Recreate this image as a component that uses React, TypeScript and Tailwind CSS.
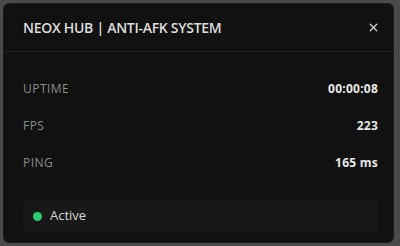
import { X } from "lucide-react";

const stats = [
  { label: "UPTIME", value: "00:00:08" },
  { label: "FPS", value: "223" },
  { label: "PING", value: "165 ms" },
];

export default function App() {
  return (
    <div
      className="h-[246px] w-[400px] bg-[#4a4a4a] p-[3px] pr-[6px] pb-[3px]"
      style={{ fontFamily: '"Open Sans", "Noto Sans", sans-serif' }}
    >
      <div className="flex h-full flex-col rounded-md border border-[#1c1c1c] bg-[#111111]">
        <div className="flex h-[48px] items-center justify-between border-b border-[#222222] pl-[19px] pr-[13px]">
          <span className="text-[14px] font-semibold tracking-[-0.02em] text-[#dedede]">
            NEOX HUB | ANTI-AFK SYSTEM
          </span>
          <X className="h-[13px] w-[13px] text-[#cfcfcf]" strokeWidth={2.5} />
        </div>

        <div className="flex flex-col pl-[19px] pr-[15px] pt-[28px]">
          {stats.map((s) => (
            <div key={s.label} className="flex h-[37px] items-start justify-between">
              <span className="text-[12px] tracking-[0.04em] text-[#8c8c8c]">{s.label}</span>
              <span className="text-[12px] font-bold tracking-[0.02em] text-[#e8e8e8]">{s.value}</span>
            </div>
          ))}
        </div>

        <div className="mt-auto mb-[10px] ml-[19px] mr-[15px] flex h-[32px] items-center gap-[8px] rounded bg-[#181818] pl-[10px]">
          <span className="h-[9px] w-[9px] rounded-full bg-[#2ecc71]" />
          <span className="text-[13px] text-[#d6d6d6]">Active</span>
        </div>
      </div>
    </div>
  );
}
